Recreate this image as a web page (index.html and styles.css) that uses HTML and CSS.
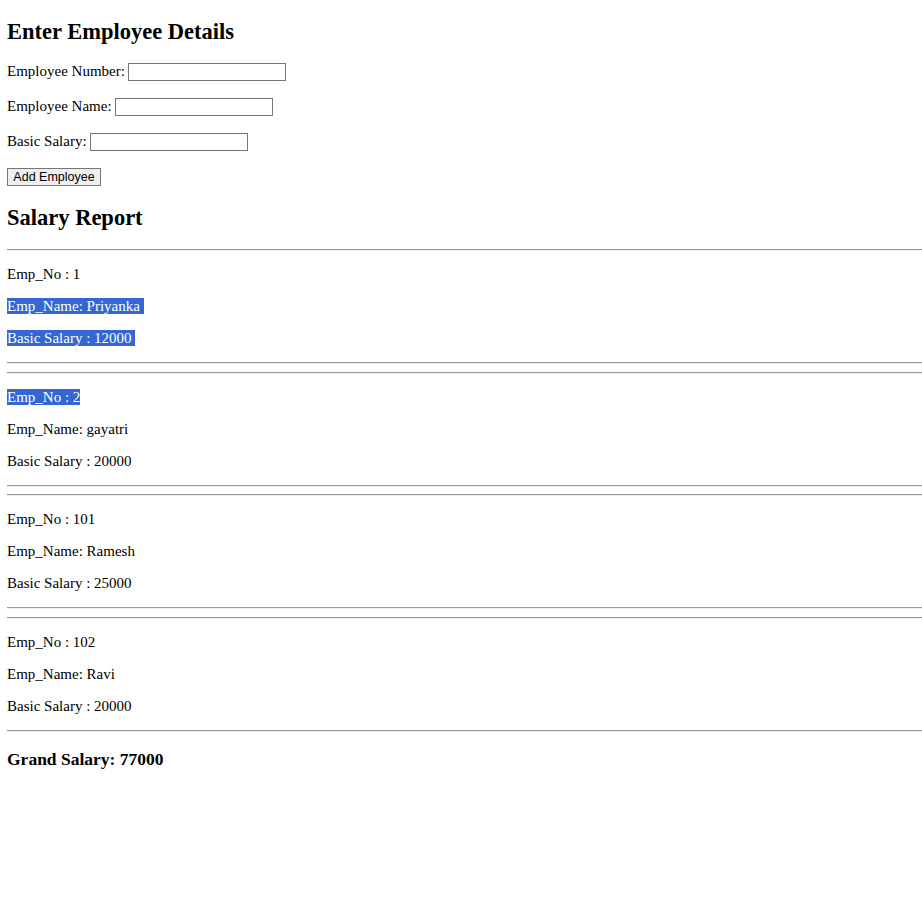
FILE: index.html
```html
<!DOCTYPE html>
<html>
<head>
<meta charset="utf-8">
<title>Employee Details</title>
<link rel="stylesheet" href="styles.css">
</head>
<body>
<h2 class="title">Enter Employee Details</h2>
<form class="emp-form">
  <p class="row">Employee Number: <input class="field" type="text"></p>
  <p class="row">Employee Name: <input class="field" type="text"></p>
  <p class="row">Basic Salary: <input class="field" type="text"></p>
  <p class="row row-btn"><button class="btn" type="button">Add Employee</button></p>
</form>
<h2 class="title">Salary Report</h2>
<hr class="rule">
<p class="line">Emp_No : 1</p>
<p class="line"><span class="sel">Emp_Name: Priyanka&nbsp;</span></p>
<p class="line"><span class="sel">Basic Salary : 12000&nbsp;</span></p>
<hr class="rule">
<hr class="rule">
<p class="line"><span class="sel">Emp_No : 2</span></p>
<p class="line">Emp_Name: gayatri</p>
<p class="line">Basic Salary : 20000</p>
<hr class="rule">
<hr class="rule">
<p class="line">Emp_No : 101</p>
<p class="line">Emp_Name: Ramesh</p>
<p class="line">Basic Salary : 25000</p>
<hr class="rule">
<hr class="rule">
<p class="line">Emp_No : 102</p>
<p class="line">Emp_Name: Ravi</p>
<p class="line">Basic Salary : 20000</p>
<hr class="rule">
<h3 class="total">Grand Salary: 77000</h3>
</body>
</html>
```
FILE: styles.css
```css
html, body {
  background: #fff;
}
body {
  margin: 0;
  padding: 0 0 0 7px;
  font-family: "Liberation Serif", "Times New Roman", serif;
  font-size: 15px;
  color: #000;
}
.title {
  font-size: 22.5px;
  font-weight: bold;
  margin: 18.5px 0;
  line-height: 26px;
}
.emp-form {
  margin: 0;
}
.row {
  margin: 15px 0;
  height: 20px;
  line-height: 17px;
  display: flex;
  align-items: flex-start;
}
.row-btn {
  height: 18px;
}
.field {
  box-sizing: border-box;
  width: 158px;
  height: 18px;
  margin: 0 0 0 3px;
  padding: 1px 2px;
  border: 1px solid #767676;
  background: #fff;
  font-family: "Liberation Sans", Arial, sans-serif;
  font-size: 12.5px;
}
.btn {
  box-sizing: border-box;
  width: 94px;
  height: 18px;
  padding: 0;
  margin: 0;
  border: 1px solid #767676;
  border-radius: 0;
  background: #efefef;
  color: #000;
  font-family: "Liberation Sans", Arial, sans-serif;
  font-size: 12.5px;
  line-height: 16px;
}
.rule {
  margin: 7.5px 0;
  height: 0;
  border: none;
  border-top: 1px solid #9a9a9a;
  border-bottom: 1px solid #eeeeee;
}
.line {
  margin: 15px 0;
  line-height: 17px;
}
.sel {
  background: #3467d3;
  color: #fff;
}
.total {
  font-size: 17.5px;
  font-weight: bold;
  margin: 17.5px 0;
  line-height: 20px;
}
```
